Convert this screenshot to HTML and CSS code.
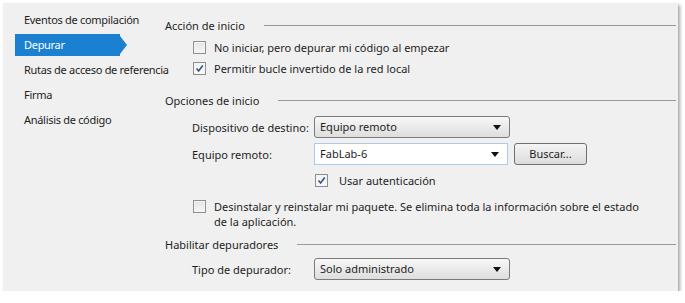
FILE: index.html
```html
<!DOCTYPE html>
<html lang="es">
<head>
<meta charset="utf-8">
<title>Depurar</title>
<link rel="stylesheet" href="styles.css">
</head>
<body>
<div class="panel">
  <nav class="sidebar">
    <div class="nav-item">Eventos de compilación</div>
    <div class="nav-item selected">Depurar</div>
    <div class="nav-item">Rutas de acceso de referencia</div>
    <div class="nav-item">Firma</div>
    <div class="nav-item">Análisis de código</div>
  </nav>
  <main class="content">
    <div class="group-header h1"><span>Acción de inicio</span><i class="rule"></i></div>
    <label class="check-row r1"><span class="cb"></span><span class="cb-text">No iniciar, pero depurar mi código al empezar</span></label>
    <label class="check-row r2"><span class="cb checked"><svg viewBox="0 0 11 11" width="11" height="11"><path d="M2.5 5.5 L4.6 8 L8.8 2.6" fill="none" stroke="#3b4f86" stroke-width="1.6"/></svg></span><span class="cb-text">Permitir bucle invertido de la red local</span></label>

    <div class="group-header h2"><span>Opciones de inicio</span><i class="rule"></i></div>
    <div class="field-row f1">
      <span class="field-label">Dispositivo de destino:</span>
      <div class="select"><span>Equipo remoto</span><i class="arrow"></i></div>
    </div>
    <div class="field-row f2">
      <span class="field-label">Equipo remoto:</span>
      <div class="combo"><span>FabLab-6</span><i class="arrow"></i></div>
      <div class="button">Buscar...</div>
    </div>
    <label class="check-row auth"><span class="cb checked"><svg viewBox="0 0 11 11" width="11" height="11"><path d="M2.5 5.5 L4.6 8 L8.8 2.6" fill="none" stroke="#3b4f86" stroke-width="1.6"/></svg></span><span class="cb-text">Usar autenticación</span></label>
    <label class="check-row multi"><span class="cb"></span><span class="cb-text">Desinstalar y reinstalar mi paquete. Se elimina toda la información sobre el estado de la aplicación.</span></label>

    <div class="group-header h3"><span>Habilitar depuradores</span><i class="rule"></i></div>
    <div class="field-row f3">
      <span class="field-label">Tipo de depurador:</span>
      <div class="select"><span>Solo administrado</span><i class="arrow"></i></div>
    </div>
  </main>
</div>
</body>
</html>
```
FILE: styles.css
```css
* { box-sizing: border-box; }
html, body { margin: 0; padding: 0; background: #ffffff; }
body {
  font-family: "Noto Sans", "Open Sans", sans-serif;
  font-size: 11px;
  color: #1e1e1e;
}
.panel {
  margin: 3px 0 0 3px;
  width: 675px;
  height: 288px;
  background: #f0f0f0;
  display: flex;
  box-shadow: 2px 2px 3px rgba(0,0,0,0.35);
}
.sidebar {
  width: 162px;
  flex: none;
  padding-top: 6px;
  display: flex;
  flex-direction: column;
  gap: 3px;
  letter-spacing: -0.3px;
}
.nav-item {
  height: 22px;
  line-height: 22px;
  padding-left: 21px;
  white-space: nowrap;
}
.nav-item.selected {
  position: relative;
  margin-left: 12px;
  width: 105px;
  padding-left: 9px;
  background: #1c80d2;
  color: #ffffff;
}
.nav-item.selected::after {
  content: "";
  position: absolute;
  right: -7px;
  top: 2px;
  width: 7px;
  height: 18px;
  background: #1c80d2;
  clip-path: polygon(0 0, 100% 50%, 0 100%);
}
.content {
  flex: 1;
  padding: 14px 2px 0 0;
  display: flex;
  flex-direction: column;
}
.group-header {
  display: flex;
  align-items: center;
  height: 16px;
  gap: 19px;
}
.rule {
  flex: 1;
  height: 1px;
  background: #9a9a9a;
}
.check-row {
  display: flex;
  align-items: flex-start;
  padding-left: 28px;
  line-height: 15px;
}
.cb {
  flex: none;
  width: 13px;
  height: 13px;
  margin-top: 1px;
  margin-right: 8px;
  border: 1px solid #8f8f8f;
  background: linear-gradient(#e4e4e4, #f6f6f6);
  box-shadow: inset 0 0 0 1px #f4f4f4;
  display: flex;
  align-items: center;
  justify-content: center;
}
.cb.checked { background: linear-gradient(#f2f2f2, #fafafa); }
.r1 { margin-top: 7px; }
.r2 { margin-top: 6px; }
.h2 { margin-top: 16px; }
.field-row {
  display: flex;
  align-items: center;
  height: 22px;
  padding-left: 27px;
}
.field-label { width: 122px; flex: none; }
.f1 { margin-top: 8px; }
.f2 { margin-top: 5px; }
.select, .combo {
  position: relative;
  width: 196px;
  height: 22px;
  line-height: 20px;
  padding-left: 5px;
  border-radius: 3px;
  border: 1px solid #7a7a7a;
  background: linear-gradient(#f7f7f7, #dedede);
}
.combo {
  width: 194px;
  border-radius: 0;
  border-color: #aecbe6;
  background: #ffffff;
}
.arrow {
  position: absolute;
  right: 8px;
  top: 8px;
  width: 0;
  height: 0;
  border-left: 4px solid transparent;
  border-right: 4px solid transparent;
  border-top: 5px solid #111;
}
.button {
  margin-left: 6px;
  width: 73px;
  height: 22px;
  line-height: 20px;
  text-align: center;
  border: 1px solid #707070;
  border-radius: 3px;
  background: linear-gradient(#f4f4f4, #dcdcdc);
}
.auth { margin-top: 8px; padding-left: 150px; }
.auth .cb { margin-right: 11px; }
.multi { margin-top: 11px; padding-right: 32px; }
.h3 { margin-top: 7px; }
.f3 { margin-top: 6px; }
```
